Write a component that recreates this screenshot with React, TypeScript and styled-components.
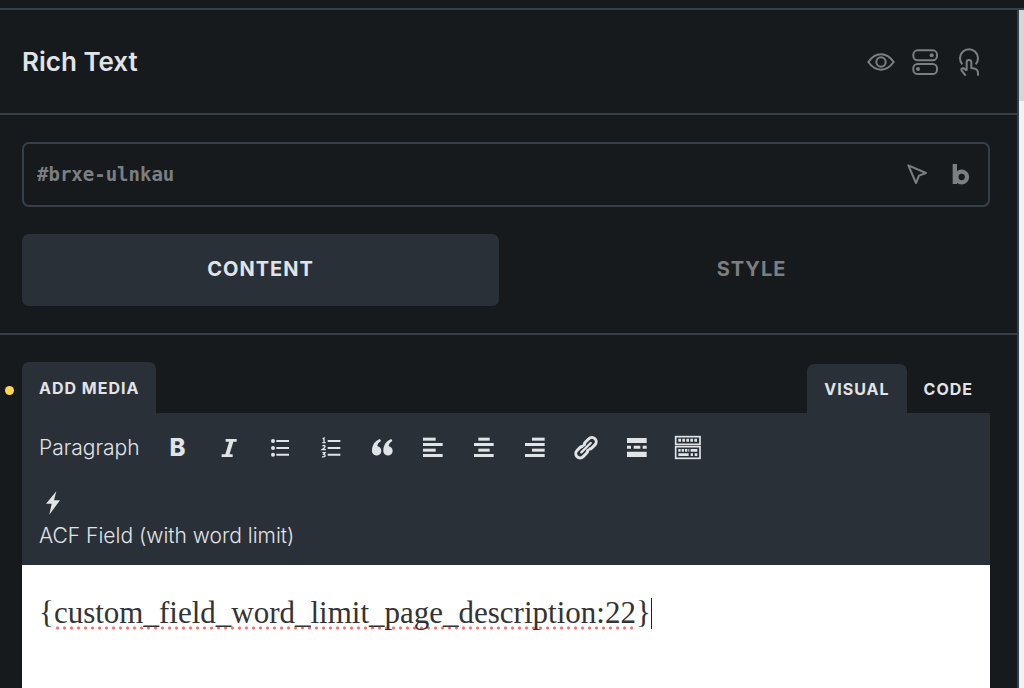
import React from "react";
import styled, { createGlobalStyle } from "styled-components";

const color = {
  bg: "#171a1d",
  panel: "#2a3038",
  line: "#36404a",
  text: "#e0e4e7",
  muted: "#7b7f82",
};

const GlobalStyle = createGlobalStyle`
  *, *::before, *::after { box-sizing: border-box; }
  body {
    margin: 0;
    background: ${color.bg};
    color: ${color.text};
    font-family: Inter, "Liberation Sans", sans-serif;
  }
  button, input, select { font: inherit; color: inherit; }
`;

const Page = styled.div`
  min-height: 100vh;
  display: flex;
  flex-direction: column;
`;

const TopBar = styled.div`
  height: 10px;
  flex: none;
  border-bottom: 2px solid ${color.line};
`;

const Body = styled.div`
  flex: 1;
  display: flex;
`;

const Panel = styled.main`
  flex: 1;
  min-width: 0;
  display: flex;
  flex-direction: column;
  border-right: 2px solid ${color.line};
`;

const ScrollTrack = styled.div`
  width: 5px;
  background: #f3f2f2;
`;

const ScrollThumb = styled.div`
  height: 91px;
  background: #d6d6d6;
`;

const Header = styled.header`
  height: 105px;
  padding: 0 34px 0 22px;
  display: flex;
  align-items: center;
  justify-content: space-between;
  border-bottom: 2px solid ${color.line};
`;

const Title = styled.h1`
  margin: 0;
  font-size: 26px;
  line-height: 32px;
  font-weight: 600;
`;

const IconGroup = styled.div`
  display: flex;
  gap: 16px;
`;

const IconButton = styled.button`
  width: 28px;
  height: 28px;
  padding: 0;
  border: 0;
  background: none;
  color: ${color.muted};
  display: grid;
  place-items: center;
`;

const Settings = styled.section`
  padding: 27px 27px 27px 22px;
  display: flex;
  flex-direction: column;
  gap: 27px;
  border-bottom: 2px solid ${color.line};
`;

const Selector = styled.div`
  height: 65px;
  padding: 0 13px 2px;
  display: flex;
  align-items: center;
  border: 2px solid ${color.line};
  border-radius: 7px;
`;

const SelectorInput = styled.input`
  flex: 1;
  min-width: 0;
  padding: 0;
  border: 0;
  outline: 0;
  background: none;
  color: ${color.muted};
  font: bold 19px "DejaVu Sans Mono", monospace;
`;

const Tabs = styled.div`
  display: grid;
  grid-template-columns: 1fr 1fr;
  gap: 14px;
`;

const Tab = styled.button<{ $active?: boolean }>`
  height: 72px;
  padding: 0 0 2px;
  border: 0;
  border-radius: 7px;
  background: ${(p) => (p.$active ? color.panel : "none")};
  color: ${(p) => (p.$active ? color.text : color.muted)};
  font-size: 20px;
  font-weight: 700;
  letter-spacing: 1px;
  text-transform: uppercase;
`;

const EditorSection = styled.section`
  position: relative;
  flex: 1;
  padding: 27px 27px 0 22px;
  display: flex;
  flex-direction: column;
`;

const ChangedDot = styled.span`
  position: absolute;
  left: 5px;
  top: 51px;
  width: 9px;
  height: 9px;
  border-radius: 50%;
  background: #ffd64f;
`;

const EditorTop = styled.div`
  display: flex;
  align-items: flex-end;
  justify-content: space-between;
`;

const ModeTabs = styled.div`
  display: flex;
`;

const EditorTab = styled.button<{ $filled?: boolean; $tall?: boolean }>`
  height: ${(p) => (p.$tall ? 51 : 49)}px;
  padding: 0 17px;
  border: 0;
  border-radius: 7px 7px 0 0;
  background: ${(p) => (p.$filled ? color.panel : "none")};
  font-size: 16px;
  font-weight: 700;
  letter-spacing: 1px;
  text-transform: uppercase;
`;

const Toolbar = styled.div`
  padding: 9px 17px 15px;
  background: ${color.panel};
`;

const ToolRow = styled.div`
  height: 51px;
  display: flex;
  align-items: center;
`;

const FormatSelect = styled.select`
  width: 113px;
  padding: 0;
  border: 0;
  outline: 0;
  appearance: none;
  background: none;
  font-size: 21px;
  font-weight: 300;
  line-height: 24px;
`;

const Tool = styled.button`
  width: 51px;
  height: 51px;
  padding: 0;
  border: 0;
  background: none;
  display: grid;
  place-items: center;
  font-size: 24px;
  font-weight: 800;
`;

const DynamicTools = styled.div`
  padding-top: 16px;
  display: flex;
  flex-direction: column;
  align-items: flex-start;
  gap: 5px;
`;

const DynamicButton = styled.button`
  padding: 0;
  border: 0;
  background: none;
  display: block;
  font-size: 21px;
  font-weight: 300;
  line-height: 28px;
`;

const Editor = styled.div`
  flex: 1;
  padding: 28px 17px;
  background: #fff;
  color: #333;
  outline: 0;
  font: 31px/40px Georgia, "Liberation Serif", serif;
  p { margin: 0; display: flex; align-items: center; }
`;

const Misspelled = styled.span`
  background: radial-gradient(circle, #ff6b63 1px, transparent 2px) 0 100% / 7px 4px repeat-x;
  line-height: 34px;
`;

const Caret = styled.span`
  width: 1px;
  height: 31px;
  background: #222;
`;

function Svg({ children }: { children: React.ReactNode }) {
  return (
    <svg width="28" height="28" viewBox="0 0 84 84" fill="none" stroke="currentColor" strokeWidth="6" display="block" aria-hidden="true">
      {children}
    </svg>
  );
}

function Bars({ rows }: { rows: number[][] }) {
  return (
    <Svg>
      <g fill="currentColor" stroke="none">
        {rows.map(([x, w], i) => (
          <rect key={i} x={x} y={[11, 27, 44, 60][i]} width={w} height="9" />
        ))}
      </g>
    </Svg>
  );
}

const tools = [
  { label: "Bold", icon: <>B</> },
  {
    label: "Italic",
    icon: (
      <Svg>
        <path d="M32 19H65M20 65H53" strokeWidth="8" />
        <path d="M50 19L36 65" strokeWidth="12" />
      </Svg>
    ),
  },
  {
    label: "Bulleted list",
    icon: (
      <Svg>
        <path d="M31 21H69M31 42H69M31 62H69" />
        <g fill="currentColor" stroke="none">
          <circle cx="21" cy="21" r="6" />
          <circle cx="21" cy="42" r="6" />
          <circle cx="21" cy="62" r="6" />
        </g>
      </Svg>
    ),
  },
  {
    label: "Numbered list",
    icon: (
      <Svg>
        <path d="M32 21H70M32 42H70M32 62H70" />
        <path d="M17 15L21 12V26M16 26H26M16 36Q24 32 24 38Q23 42 16 47H27M16 56H24L20 61Q26 62 24 67Q20 70 15 68" strokeWidth="4" />
      </Svg>
    ),
  },
  {
    label: "Blockquote",
    icon: (
      <Svg>
        <g fill="currentColor" stroke="none">
          <path d="M36 15L39 21C31 26 28 31 28 37A14 14 0 1 1 12 50C12 33 21 20 36 15Z" />
          <path d="M70 15L73 21C65 26 62 31 62 37A14 14 0 1 1 46 50C46 33 55 20 70 15Z" />
        </g>
      </Svg>
    ),
  },
  { label: "Align left", icon: <Bars rows={[[12, 38], [12, 59], [12, 38], [12, 59]]} /> },
  { label: "Align center", icon: <Bars rows={[[25, 34], [12, 59], [25, 34], [12, 59]]} /> },
  { label: "Align right", icon: <Bars rows={[[33, 38], [12, 59], [33, 38], [12, 59]]} /> },
  {
    label: "Insert link",
    icon: (
      <Svg>
        <g transform="translate(42 41) rotate(-45)" strokeWidth="9">
          <path d="M-3 -8Q-6 -13 -12 -13H-25a13 13 0 0 0 0 26H-12Q-2 13 0 6" />
          <path d="M3 8Q6 13 12 13H25a13 13 0 0 0 0 -26H12Q2 -13 0 -6" />
          <path d="M-20 0H20" strokeLinecap="round" strokeWidth="7" />
        </g>
      </Svg>
    ),
  },
  {
    label: "Read more",
    icon: (
      <Svg>
        <path d="M12 12H71V27H12ZM12 35H24V44H12ZM32 35H52V44H32ZM59 35H71V44H59ZM12 53H71V69H12Z" fill="currentColor" stroke="none" />
      </Svg>
    ),
  },
  {
    label: "Toolbar toggle",
    icon: (
      <Svg>
        <g strokeWidth="5">
          <rect x="5" y="8" width="73" height="23" />
          <rect x="5" y="38" width="73" height="35" />
        </g>
        <path d="M13 19H70" strokeWidth="9" strokeDasharray="8 4" />
        <path d="M13 49H46" strokeWidth="8" strokeDasharray="7 3" />
        <path d="M13 62H44M50 49H70M50 62H57M62 62H70" strokeWidth="8" />
      </Svg>
    ),
  },
];

export default function App() {
  return (
    <Page>
      <GlobalStyle />
      <TopBar />
      <Body>
        <Panel>
          <Header>
            <Title>Rich Text</Title>
            <IconGroup>
              <IconButton aria-label="Visibility">
                <Svg>
                  <path d="M4 42C14 28 26 19 42 19S70 28 80 42C70 56 58 65 42 65S14 56 4 42Z" />
                  <circle cx="42" cy="42" r="14" />
                </Svg>
              </IconButton>
              <IconButton aria-label="Conditions">
                <Svg>
                  <rect x="7" y="7" width="71" height="30" rx="13" />
                  <rect x="7" y="48" width="71" height="30" rx="13" />
                  <g fill="currentColor" stroke="none">
                    <circle cx="62" cy="22" r="6" />
                    <circle cx="21" cy="63" r="6" />
                  </g>
                </Svg>
              </IconButton>
              <IconButton aria-label="Interactions">
                <Svg>
                  <path d="M22 49A27 27 0 1 1 62 49" />
                  <path d="M35 68V43a7 7 0 0 1 14 0V60L60 62Q69 65 69 75V83M35 67L26 61Q17 60 20 68L32 83" />
                </Svg>
              </IconButton>
            </IconGroup>
          </Header>

          <Settings>
            <Selector>
              <SelectorInput aria-label="Element ID" defaultValue="#brxe-ulnkau" spellCheck={false} />
              <IconGroup>
                <IconButton aria-label="States">
                  <Svg>
                    <path d="M16 16L69 39L48 47L39 69Z" strokeLinejoin="round" />
                  </Svg>
                </IconButton>
                <IconButton aria-label="Classes">
                  <Svg>
                    <rect x="17" y="12" width="13" height="60" fill="currentColor" stroke="none" />
                    <circle cx="44" cy="51" r="16" strokeWidth="13" />
                  </Svg>
                </IconButton>
              </IconGroup>
            </Selector>
            <Tabs role="tablist">
              <Tab role="tab" aria-selected="true" $active>Content</Tab>
              <Tab role="tab" aria-selected="false">Style</Tab>
            </Tabs>
          </Settings>

          <EditorSection>
            <ChangedDot />
            <EditorTop>
              <EditorTab $filled $tall>Add media</EditorTab>
              <ModeTabs role="tablist">
                <EditorTab role="tab" aria-selected="true" $filled>Visual</EditorTab>
                <EditorTab role="tab" aria-selected="false">Code</EditorTab>
              </ModeTabs>
            </EditorTop>
            <Toolbar>
              <ToolRow>
                <FormatSelect aria-label="Text format">
                  <option>Paragraph</option>
                </FormatSelect>
                {tools.map((t) => (
                  <Tool key={t.label} aria-label={t.label}>{t.icon}</Tool>
                ))}
              </ToolRow>
              <DynamicTools>
                <DynamicButton aria-label="Dynamic data">
                  <Svg>
                    <path d="M52 7L21 44H38L31 77L63 34H45Z" fill="currentColor" stroke="none" />
                  </Svg>
                </DynamicButton>
                <DynamicButton>ACF Field (with word limit)</DynamicButton>
              </DynamicTools>
            </Toolbar>
            <Editor role="textbox" aria-label="Content" aria-multiline="true" contentEditable suppressContentEditableWarning spellCheck={false}>
              <p>
                {"{"}
                <Misspelled>custom_field_word_limit_page_description:22</Misspelled>
                {"}"}
                <Caret />
              </p>
            </Editor>
          </EditorSection>
        </Panel>
        <ScrollTrack>
          <ScrollThumb />
        </ScrollTrack>
      </Body>
    </Page>
  );
}
